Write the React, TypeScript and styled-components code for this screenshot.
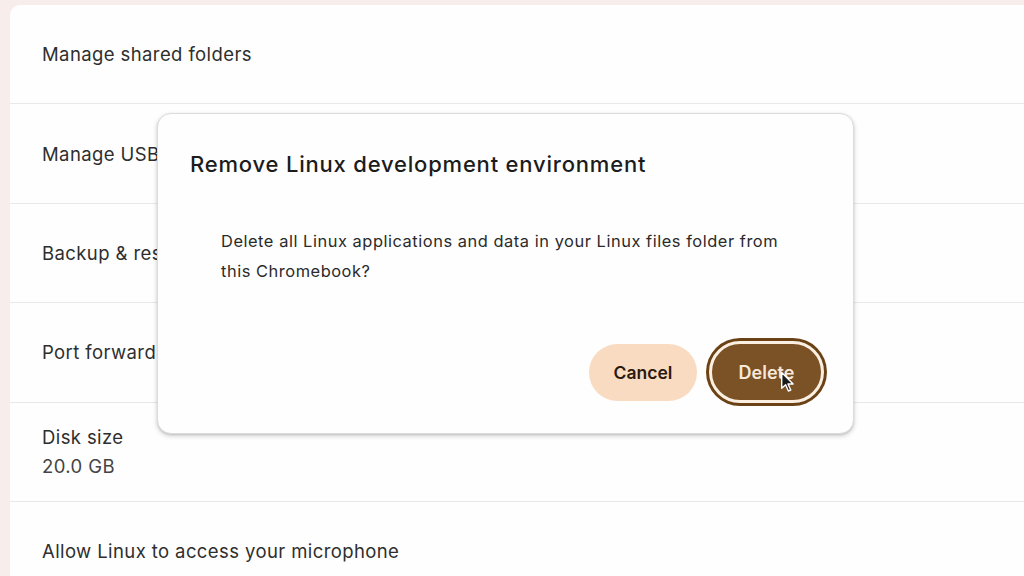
import React from "react";
import styled, { createGlobalStyle } from "styled-components";

const GlobalStyle = createGlobalStyle`
  html, body {
    margin: 0;
    padding: 0;
    background: #f7eeeb;
    font-family: Inter, Roboto, "Liberation Sans", sans-serif;
  }
  * { box-sizing: border-box; }
`;

const rows = [
  { title: "Manage shared folders" },
  { title: "Manage USB devices" },
  { title: "Backup & restore" },
  { title: "Port forwarding" },
  { title: "Disk size", sub: "20.0 GB" },
  { title: "Allow Linux to access your microphone" },
];

const App = () => {
  return (
    <>
      <GlobalStyle />
      <Page>
        <Card>
          {rows.map((row) => (
            <Row key={row.title}>
              <RowTitle>{row.title}</RowTitle>
              {row.sub && <RowSub>{row.sub}</RowSub>}
            </Row>
          ))}
        </Card>

        <Dialog role="dialog">
          <DialogTitle>Remove Linux development environment</DialogTitle>
          <DialogBody>
            Delete all Linux applications and data in your Linux files folder from
            this Chromebook?
          </DialogBody>
          <Actions>
            <Button $variant="tonal">Cancel</Button>
            <Button $variant="filled">
              Delete
              <Cursor viewBox="0 0 20 28" aria-hidden>
                <path
                  d="M2 2 L2 22 L7 17.5 L10.5 25.5 L13.5 24.2 L10 16.5 L16.5 16.5 Z"
                  fill="#1a1a1a"
                  stroke="#ffffff"
                  strokeWidth="1.8"
                  strokeLinejoin="round"
                />
              </Cursor>
            </Button>
          </Actions>
        </Dialog>
      </Page>
    </>
  );
};

const Page = styled.div`
  position: relative;
  width: 1024px;
  height: 576px;
  overflow: hidden;
  padding: 5px 0 0 10px;
`;

const Card = styled.div`
  background: #fefefe;
  border-top-left-radius: 10px;
  height: 100%;
`;

const Row = styled.div`
  height: 99.4px;
  border-bottom: 1px solid #e8e8e8;
  display: flex;
  flex-direction: column;
  justify-content: center;
  gap: 7px;
  padding-left: 32px;
`;

const RowTitle = styled.div`
  font-size: 18.5px;
  letter-spacing: 0.4px;
  color: #2e2e2e;
`;

const RowSub = styled.div`
  font-size: 18.5px;
  letter-spacing: 0.4px;
  color: #444;
`;

const Dialog = styled.div`
  position: absolute;
  left: 157px;
  top: 113px;
  width: 697px;
  height: 321px;
  background: #fefefe;
  border: 1px solid #dcdcdc;
  border-radius: 14px;
  box-shadow: 0 2px 5px rgba(0, 0, 0, 0.18), 0 1px 2px rgba(0, 0, 0, 0.1);
  padding: 35px 26px 30px 32px;
  display: flex;
  flex-direction: column;
`;

const DialogTitle = styled.h2`
  margin: 0;
  font-size: 22px;
  line-height: 30px;
  font-weight: 500;
  letter-spacing: 0.8px;
  color: #1c1c1c;
`;

const DialogBody = styled.p`
  margin: 47px 0 0 31px;
  width: 580px;
  font-size: 16.4px;
  line-height: 30px;
  letter-spacing: 0.55px;
  color: #2a2a2a;
`;

const Actions = styled.div`
  margin-top: auto;
  display: flex;
  justify-content: flex-end;
  align-items: center;
  gap: 12px;
  padding-right: 3px;
`;

const Button = styled.button<{ $variant: "tonal" | "filled" }>`
  position: relative;
  border-radius: 999px;
  font-family: Inter, Roboto, "Liberation Sans", sans-serif;
  font-size: 17.5px;
  font-weight: 600;
  cursor: pointer;
  ${(p) =>
    p.$variant === "tonal"
      ? `
    width: 108px;
    height: 57px;
    border: none;
    background: #f9dbc2;
    color: #2b1a0e;
  `
      : `
    width: 115px;
    height: 62px;
    border: 3px solid #fbefe2;
    background: #7b5126;
    color: #f6e8da;
    font-size: 18px;
    box-shadow: 0 0 0 3px #6a4215;
  `}
`;

const Cursor = styled.svg`
  position: absolute;
  left: 68px;
  top: 27px;
  width: 16px;
  height: 22px;
`;

export default App;
